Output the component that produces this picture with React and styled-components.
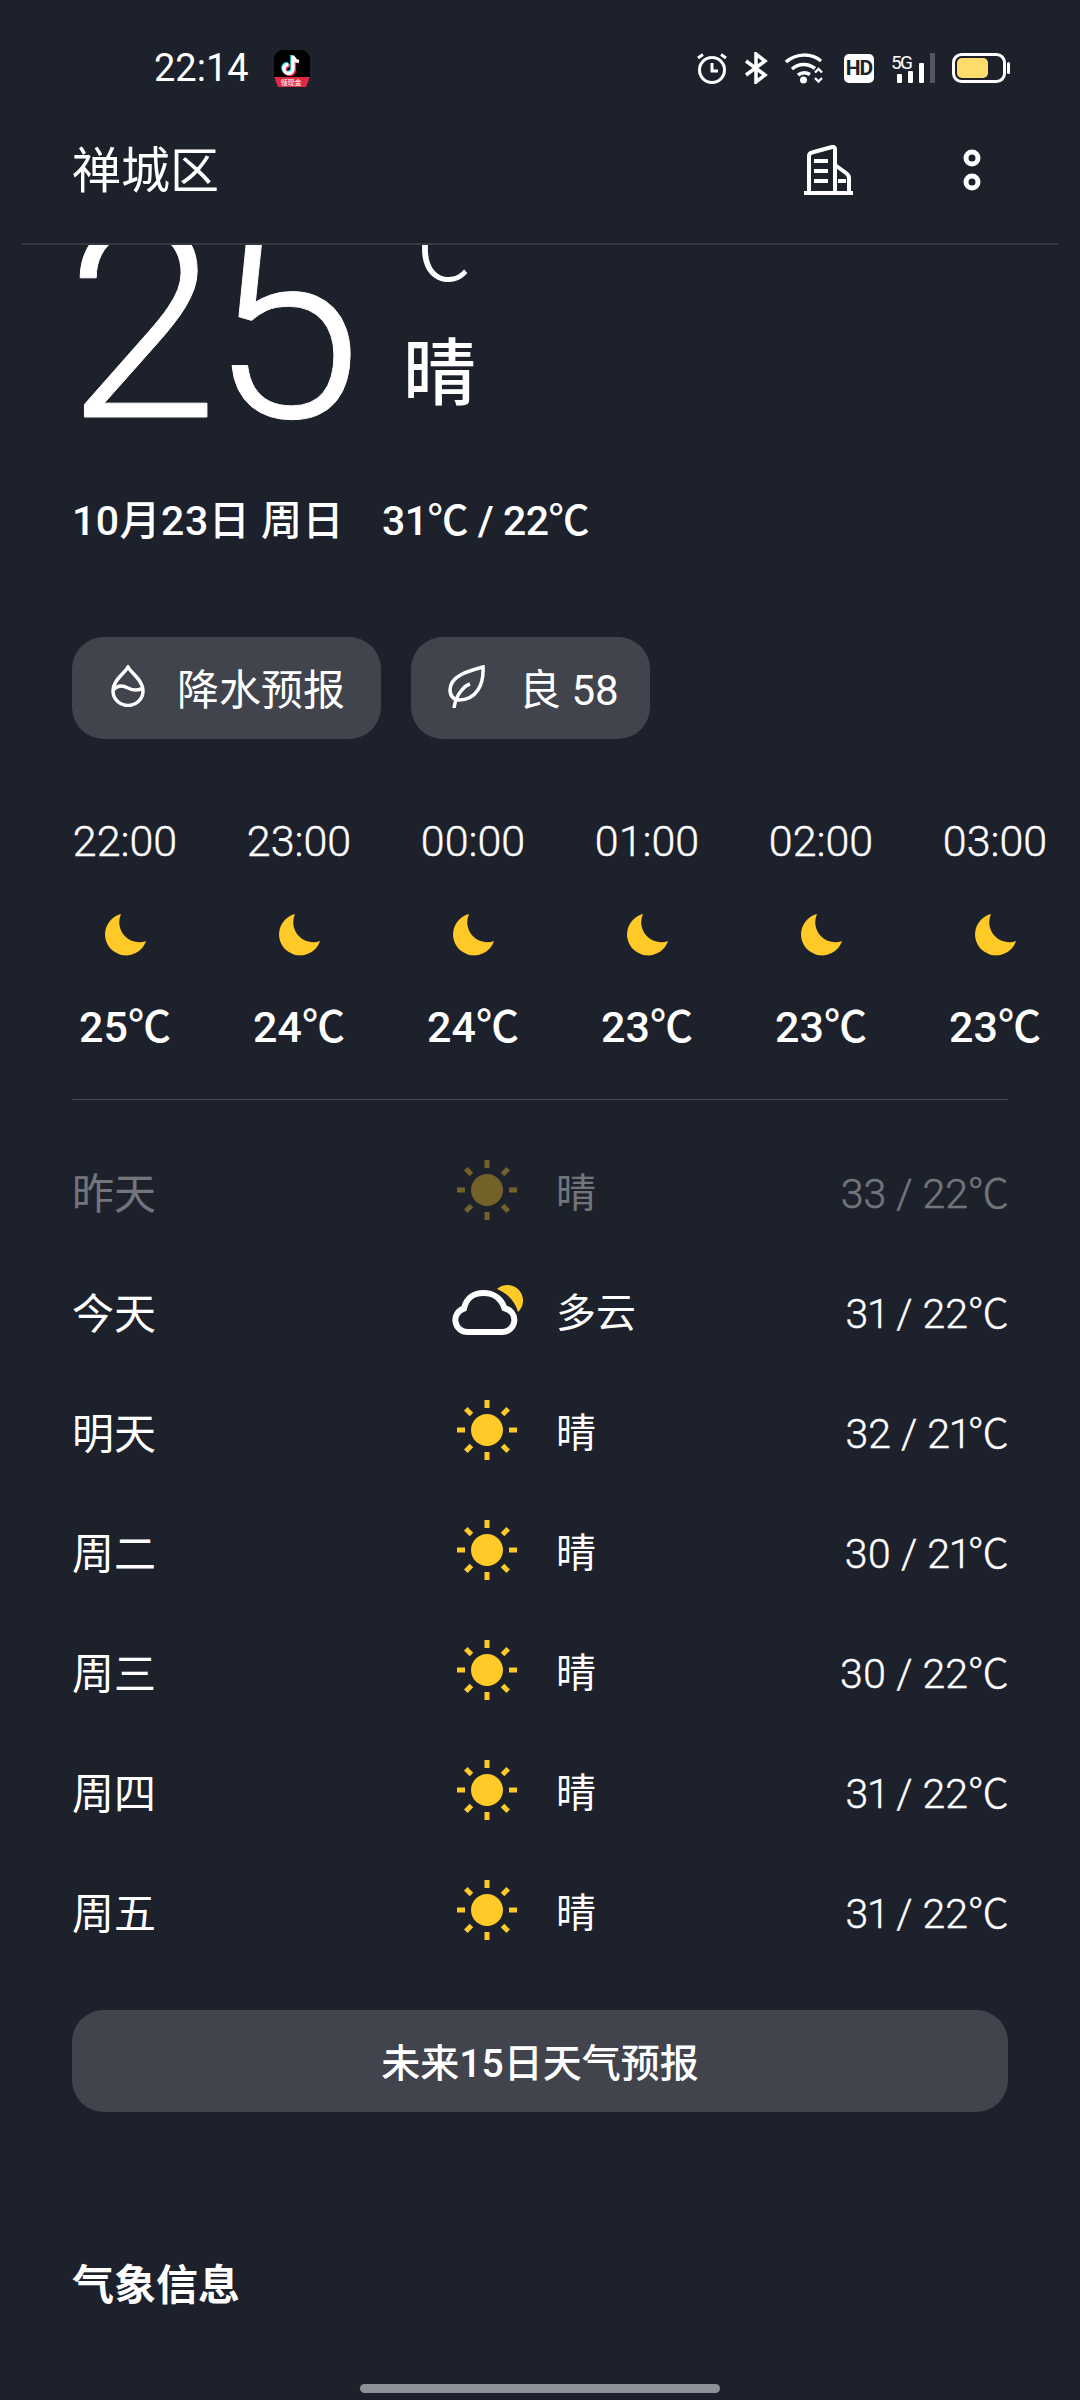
import React from 'react'
import styled, { createGlobalStyle } from 'styled-components'

const hours = [
  { time: '22:00', temp: '25℃' },
  { time: '23:00', temp: '24℃' },
  { time: '00:00', temp: '24℃' },
  { time: '01:00', temp: '23℃' },
  { time: '02:00', temp: '23℃' },
  { time: '03:00', temp: '23℃' },
]

const days = [
  { day: '昨天', cond: '晴', temp: '33 / 22℃', past: true },
  { day: '今天', cond: '多云', temp: '31 / 22℃', cloudy: true },
  { day: '明天', cond: '晴', temp: '32 / 21℃' },
  { day: '周二', cond: '晴', temp: '30 / 21℃' },
  { day: '周三', cond: '晴', temp: '30 / 22℃' },
  { day: '周四', cond: '晴', temp: '31 / 22℃' },
  { day: '周五', cond: '晴', temp: '31 / 22℃' },
]

const Global = createGlobalStyle`
  html, body {
    margin: 0;
    padding: 0;
    background: #1d212c;
  }
  body {
    font-family: Roboto, "Noto Sans CJK SC", sans-serif;
    color: #fff;
  }
`

const Page = styled.div`
  width: 1080px;
  height: 2400px;
  overflow: hidden;
  background: #1d212c;
`

const StatusBar = styled.div`
  height: 108px;
  display: flex;
  align-items: center;
  padding: 28px 69px 0 154px;
  box-sizing: border-box;
`

const Clock = styled.span`
  font-size: 38px;
  line-height: 1;
  width: 120px;
`

const StatusIcons = styled.div`
  margin-left: auto;
  display: flex;
  align-items: center;
  gap: 17px;
`

const HdBadge = styled.span`
  width: 30px;
  height: 29px;
  border-radius: 5px;
  background: #fff;
  color: #1d212c;
  font-size: 21px;
  font-weight: 700;
  letter-spacing: -1px;
  display: flex;
  align-items: center;
  justify-content: center;
`

const Header = styled.header`
  height: 124px;
  margin: 0 22px;
  padding: 0 50px 11px;
  display: flex;
  align-items: center;
  border-bottom: 2px solid #363944;
`

const City = styled.h1`
  margin: 0 0 8px;
  font-size: 49px;
  font-weight: 400;
`

const HeaderIcons = styled.div`
  margin-left: auto;
  display: flex;
  align-items: center;
  gap: 110px;
  padding-right: 27px;
`

const Hero = styled.section`
  height: 200px;
  padding-left: 72px;
  display: flex;
  overflow: hidden;
`

const BigTemp = styled.div`
  width: 337px;
  margin-top: -83px;
  margin-left: -6px;
  font-size: 275px;
  line-height: 322px;
  font-weight: 300;
  letter-spacing: -9px;
  -webkit-text-stroke: 1px #fff;
`

const HeroSide = styled.div`
  display: flex;
  flex-direction: column;
`

const Unit = styled.div`
  margin-top: -54px;
  margin-left: -17px;
  height: 147px;
  font-size: 86px;
  line-height: 122px;
  font-weight: 300;
`

const Condition = styled.div`
  font-size: 73px;
  line-height: 72px;
  font-weight: 500;
`

const DateLine = styled.div`
  margin-top: 48px;
  padding-left: 72px;
  display: flex;
  gap: 38px;
  font-size: 41px;
  line-height: 56px;
  font-weight: 500;
`

const DatePart = styled.span`
  letter-spacing: 0.5px;
`

const RangePart = styled.span`
  letter-spacing: -0.5px;
`

const Chips = styled.div`
  margin-top: 88px;
  padding-left: 72px;
  display: flex;
  gap: 30px;
`

const Chip = styled.div`
  height: 102px;
  padding: 0 36px 4px 39px;
  box-sizing: border-box;
  border-radius: 32px;
  background: #42444d;
  display: flex;
  align-items: center;
  gap: 32px;
  font-size: 42px;
`

const AirChip = styled(Chip)`
  padding: 0 31px 4px 37px;
  gap: 33px;
`

const Hours = styled.div`
  margin-top: 74px;
  margin-left: 38px;
  display: grid;
  grid-template-columns: repeat(6, 174px);
`

const Hour = styled.div`
  display: flex;
  flex-direction: column;
  align-items: center;
`

const HourTime = styled.span`
  font-size: 43px;
  line-height: 56px;
  font-weight: 300;
  -webkit-text-stroke: 0.4px #fff;
`

const MoonWrap = styled.div`
  height: 44px;
  margin-top: 45px;
`

const HourTemp = styled.span`
  margin-top: 41px;
  font-size: 43px;
  line-height: 56px;
  font-weight: 500;
`

const Divider = styled.div`
  margin: 44px 72px 0;
  height: 1px;
  background: #4a4d57;
`

const DayList = styled.div`
  margin: 30px 72px 0;
`

const DayRow = styled.div`
  height: 120px;
  display: grid;
  grid-template-columns: 373px 84px 27px 1fr;
  align-items: center;
  font-size: 40px;
  opacity: ${(p) => (p.$past ? 0.38 : 1)};
`

const DayName = styled.span`
  font-size: 42px;
`

const DayIcon = styled.div`
  display: flex;
  justify-content: center;
  grid-column: 2;
`

const DayCond = styled.span`
  grid-column: 4 / 5;
  grid-row: 1;
`

const DayTemp = styled.span`
  grid-column: 4 / 5;
  grid-row: 1;
  justify-self: end;
  margin-right: -1px;
  font-size: 41px;
  font-weight: 300;
  font-variant-numeric: proportional-nums;
  -webkit-text-stroke: 0.4px #fff;
`

const WideButton = styled.div`
  margin: 40px 72px 0;
  height: 102px;
  padding-bottom: 2px;
  box-sizing: border-box;
  border-radius: 32px;
  background: #42444d;
  display: flex;
  align-items: center;
  justify-content: center;
  font-size: 39px;
  font-weight: 500;
`

const SectionTitle = styled.h2`
  margin: 144px 0 0 72px;
  font-size: 42px;
  line-height: 60px;
  font-weight: 700;
`

const HomeBar = styled.div`
  width: 360px;
  height: 9px;
  margin: 68px auto 0;
  border-radius: 5px;
  background: #8e9198;
`

const TikTokIcon = () => (
  <svg width="36" height="37" viewBox="0 0 36 37">
    <path d="M9 0h18a9 9 0 0 1 9 9v21H0V9a9 9 0 0 1 9-9z" fill="#000" />
    <path d="M0 27h36l-4 10H4z" fill="#dc2a44" />
    <text x="17" y="34.500" fontSize="7" fontWeight="700" textAnchor="middle" fill="#ffd0d4" fontFamily="'Noto Sans CJK SC'">领现金</text>
    <g fill="none" strokeWidth="3.400">
      <path d="M18 5v13a4.500 4.500 0 1 1-4.500-4.500" stroke="#25f4ee" />
      <path d="M20.500 7v13a4.500 4.500 0 1 1-4.500-4.500" stroke="#fe2c55" />
      <path d="M19 6v13a4.500 4.500 0 1 1-4.500-4.500M19 6c.5 3 2.500 5 6 5.500" stroke="#fff" />
    </g>
  </svg>
)

const AlarmIcon = () => (
  <svg width="30" height="32" viewBox="0 0 30 32" fill="none" stroke="#fff">
    <circle cx="15" cy="18" r="12.500" strokeWidth="3" />
    <path d="M15 11v8h6" strokeWidth="3" />
    <path d="M1 6l5-3.500M29 6l-5-3.500" strokeWidth="3" />
  </svg>
)

const BluetoothIcon = () => (
  <svg width="24" height="32" viewBox="0 0 24 32" fill="none" stroke="#fff" strokeWidth="3.500">
    <path d="M2 9l19 14-9 7V2l9 7L2 23" />
  </svg>
)

const WifiIcon = () => (
  <svg width="42" height="32" viewBox="0 0 42 32" fill="none">
    <g stroke="#fff" strokeWidth="3.500">
      <path d="M1 10C11 1 26 1 36 9" />
      <path d="M7 17c7-6 16-6 23-.500" />
      <path d="M13 23c4-3 8-3 12-.500" />
    </g>
    <circle cx="18.500" cy="28" r="3.500" fill="#fff" />
    <path d="M30 20.500l3.500-3.500 3.500 3.500M30 26l3.500 3.500L37 26" stroke="#fff" strokeWidth="2.400" />
  </svg>
)

const SignalIcon = () => (
  <svg width="44" height="30" viewBox="0 0 44 30">
    <text x="0" y="16" fontSize="19" fill="#fff" fontFamily="Roboto" textLength="22">5G</text>
    <rect x="6" y="21" width="5" height="9" rx="1" fill="#fff" />
    <rect x="17" y="18" width="5" height="12" rx="1" fill="#fff" />
    <rect x="28" y="10" width="5" height="20" rx="1" fill="#fff" />
    <rect x="39" y="0" width="5" height="30" rx="1" fill="#54575f" />
  </svg>
)

const BatteryIcon = () => (
  <svg width="59" height="30" viewBox="0 0 59 30">
    <rect x="1.500" y="1.500" width="51" height="27" rx="8" fill="none" stroke="#fff" strokeWidth="3" />
    <rect x="5" y="5" width="31" height="20" rx="5" fill="#fddc6c" />
    <rect x="55" y="9" width="3" height="12" rx="1.500" fill="#fff" />
  </svg>
)

const BuildingIcon = () => (
  <svg width="49" height="50" viewBox="0 0 49 50" fill="none" stroke="#fff" strokeWidth="4">
    <path d="M0 48h49" />
    <path d="M5 48V11c0-2 1-3 3-3.500L28 2c1.500-.5 3 .5 3 2v44" />
    <path d="M31 20l11 8c2 1.500 3 3 3 5v15" />
    <path d="M10 16h14M10 26h14M10 36h14M34 36h8" />
  </svg>
)

const MenuIcon = () => (
  <svg width="18" height="42" viewBox="0 0 18 42" fill="none" stroke="#fff" strokeWidth="5">
    <circle cx="9" cy="9" r="6" />
    <circle cx="9" cy="33" r="6" />
  </svg>
)

const DropIcon = () => (
  <svg width="34" height="42" viewBox="0 0 34 42" fill="none" stroke="#fff" strokeWidth="3.500">
    <path d="M17 2c3 6 15 13 15 24a15 14.500 0 0 1-30 0C2 15 14 8 17 2z" />
    <path d="M2 25c6-6 11-4 15-2s10 3 15 0" />
  </svg>
)

const LeafIcon = () => (
  <svg width="38" height="43" viewBox="0 0 38 43" fill="none" stroke="#fff" strokeWidth="3.500">
    <path d="M35 2C36 20 28 35 11 35 6 35 2 31 2 25 2 11 20 6 35 2z" />
    <path d="M6 43c1-7 3-12 7-17 3-4 6-6 9-7" />
  </svg>
)

const MoonIcon = () => (
  <svg width="42" height="44" viewBox="0 0 42 44">
    <path d="M17 0A21 21 0 1 0 42 27A20 20 0 0 1 17 0Z" fill="#ffca28" />
  </svg>
)

const SunIcon = () => (
  <svg width="60" height="60" viewBox="-30 -30 60 60">
    <circle r="16" fill="#ffca28" />
    {[0, 45, 90, 135, 180, 225, 270, 315].map((a) => (
      <rect key={a} x="-2.500" y="-30" width="5" height="8" fill="#ffca28" transform={`rotate(${a})`} />
    ))}
  </svg>
)

const CloudIcon = () => (
  <svg width="72" height="56" viewBox="0 0 72 56">
    <path d="M46 7A14 14 0 0 1 67 30C64 19 56 11 46 7Z" fill="#ffca28" />
    <path
      d="M17 50H51A12 12 0 0 0 53.500 26.200C50 16 42 11 32.500 11 22 11 15 17 13 26.500A12 12 0 0 0 17 50Z"
      fill="none"
      stroke="#fff"
      strokeWidth="6"
    />
  </svg>
)

const App = () => {
  return (
    <Page>
      <Global />
      <StatusBar>
        <Clock>22:14</Clock>
        <TikTokIcon />
        <StatusIcons>
          <AlarmIcon />
          <BluetoothIcon />
          <WifiIcon />
          <HdBadge>HD</HdBadge>
          <SignalIcon />
          <BatteryIcon />
        </StatusIcons>
      </StatusBar>
      <Header>
        <City>禅城区</City>
        <HeaderIcons>
          <BuildingIcon />
          <MenuIcon />
        </HeaderIcons>
      </Header>
      <Hero>
        <BigTemp>25</BigTemp>
        <HeroSide>
          <Unit>℃</Unit>
          <Condition>晴</Condition>
        </HeroSide>
      </Hero>
      <DateLine>
        <DatePart>10月23日 周日</DatePart>
        <RangePart>31℃ / 22℃</RangePart>
      </DateLine>
      <Chips>
        <Chip><DropIcon />降水预报</Chip>
        <AirChip><LeafIcon />良 58</AirChip>
      </Chips>
      <Hours>
        {hours.map((h) => (
          <Hour key={h.time}>
            <HourTime>{h.time}</HourTime>
            <MoonWrap><MoonIcon /></MoonWrap>
            <HourTemp>{h.temp}</HourTemp>
          </Hour>
        ))}
      </Hours>
      <Divider />
      <DayList>
        {days.map((d) => (
          <DayRow key={d.day} $past={d.past}>
            <DayName>{d.day}</DayName>
            <DayIcon>{d.cloudy ? <CloudIcon /> : <SunIcon />}</DayIcon>
            <DayCond>{d.cond}</DayCond>
            <DayTemp>{d.temp}</DayTemp>
          </DayRow>
        ))}
      </DayList>
      <WideButton>未来15日天气预报</WideButton>
      <SectionTitle>气象信息</SectionTitle>
      <HomeBar />
    </Page>
  )
}

export default App
